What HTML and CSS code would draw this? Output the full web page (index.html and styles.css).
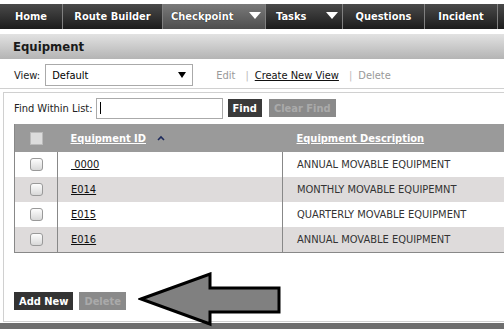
FILE: index.html
```html
<!DOCTYPE html>
<html lang="en">
<head>
    <meta charset="UTF-8">
    <title>Equipment</title>
    <link rel="stylesheet" href="styles.css">
</head>
<body>

    <!-- Main navigation -->
    <div class="topnav">
        <div class="nav-item nav-home">Home</div>
        <div class="nav-item nav-route">Route Builder</div>
        <div class="nav-item nav-check active">Checkpoint <span class="caret"></span></div>
        <div class="nav-item nav-tasks">Tasks <span class="caret caret-wide"></span></div>
        <div class="nav-item nav-questions">Questions</div>
        <div class="nav-item nav-incident">Incident</div>
        <div class="nav-item nav-rest"></div>
    </div>

    <div class="page-title">Equipment</div>

    <!-- View selector -->
    <div class="view-bar">
        <span class="label">View:</span>
        <div class="fake-select">
            <span>Default</span>
            <span class="select-arrow"></span>
        </div>
        <span class="muted link-edit">Edit</span>
        <span class="pipe">|</span>
        <a class="link" href="#">Create New View</a>
        <span class="pipe">|</span>
        <span class="muted">Delete</span>
    </div>

    <div class="list-panel">
        <div class="find-bar">
            <span class="label">Find Within List:</span>
            <div class="find-input"><span class="cursor"></span></div>
            <button class="btn btn-dark">Find</button>
            <button class="btn btn-off">Clear Find</button>
        </div>

        <table class="grid">
            <thead>
                <tr>
                    <th class="col-check"><span class="head-box"></span></th>
                    <th class="col-id"><a href="#">Equipment ID</a>
                        <svg class="sort" width="8" height="6" viewBox="0 0 8 6"><path d="M1 5 L4 2 L7 5" fill="none" stroke="#1d2a5c" stroke-width="1.6"/></svg>
                    </th>
                    <th class="col-desc"><a href="#">Equipment Description</a></th>
                </tr>
            </thead>
            <tbody>
                <tr>
                    <td class="col-check"><span class="box"></span></td>
                    <td class="col-id"><a href="#">&nbsp;0000</a></td>
                    <td class="col-desc">ANNUAL MOVABLE EQUIPMENT</td>
                </tr>
                <tr class="alt">
                    <td class="col-check"><span class="box"></span></td>
                    <td class="col-id"><a href="#">E014</a></td>
                    <td class="col-desc">MONTHLY MOVABLE EQUIPEMNT</td>
                </tr>
                <tr>
                    <td class="col-check"><span class="box"></span></td>
                    <td class="col-id"><a href="#">E015</a></td>
                    <td class="col-desc">QUARTERLY MOVABLE EQUIPMENT</td>
                </tr>
                <tr class="alt">
                    <td class="col-check"><span class="box"></span></td>
                    <td class="col-id"><a href="#">E016</a></td>
                    <td class="col-desc">ANNUAL MOVABLE EQUIPMENT</td>
                </tr>
            </tbody>
        </table>

        <div class="actions">
            <button class="btn btn-dark">Add New</button>
            <button class="btn btn-off">Delete</button>
        </div>

        <!-- callout arrow pointing at the Delete button -->
        <svg class="callout" width="150" height="60" viewBox="0 0 150 60">
            <polygon points="3,27 72,2 72,16 141,16 141,40 72,40 72,52" fill="#808080" stroke="#000" stroke-width="3" stroke-linejoin="miter"/>
        </svg>
    </div>

    <div class="footer-bar"></div>

</body>
</html>
```

FILE: styles.css
```css
body {
    margin: 0;
    font-family: "DejaVu Sans Condensed", "DejaVu Sans", sans-serif;
    font-size: 11px;
    color: #222;
    overflow: hidden;
    width: 504px;
}
.topnav {
    display: flex;
    margin-top: 4px;
    height: 25px;
    background: linear-gradient(#4a4a4a, #1c1c1c);
}
.nav-item {
    color: #fff;
    font-weight: bold;
    font-size: 11px;
    line-height: 25px;
    text-align: center;
    border-right: 1px solid #808080;
    text-shadow: 0 0 1px #000;
    flex-shrink: 0;
}
.nav-home { width: 62px; }
.nav-route { width: 99px; }
.nav-check { width: 103px; padding-left: 4px; box-sizing: border-box; }
.nav-tasks { width: 77px; padding-left: 6px; box-sizing: border-box; }
.nav-questions { width: 81px; }
.nav-incident { width: 72px; }
.nav-rest { border-right: none; flex: 1; }
.active {
    background: linear-gradient(#7a7a7a, #4e4e4e);
}
.caret {
    display: inline-block;
    width: 0;
    height: 0;
    margin-left: 12px;
    border-left: 6px solid transparent;
    border-right: 6px solid transparent;
    border-top: 7px solid #fff;
    vertical-align: 1px;
}
.caret-wide {
    margin-left: 16px;
}
.page-title {
    margin-top: 5px;
    height: 25px;
    line-height: 25px;
    padding-left: 13px;
    font-size: 13px;
    font-weight: bold;
    color: #1a1a1a;
    background: linear-gradient(#e2e2e2, #b4b4b4);
}
.view-bar {
    display: flex;
    align-items: center;
    height: 26px;
    padding: 3px 0 0 14px;
    border-bottom: 1px solid #d0d0d0;
    color: #333;
}
.label {
    color: #222;
}
.fake-select {
    display: flex;
    justify-content: space-between;
    align-items: center;
    width: 134px;
    height: 20px;
    margin-left: 5px;
    padding: 0 6px;
    border: 1px solid #aaa;
    color: #000;
}
.select-arrow {
    width: 0;
    height: 0;
    border-left: 4px solid transparent;
    border-right: 4px solid transparent;
    border-top: 6px solid #000;
}
.muted {
    color: #999;
}
.link-edit {
    margin-left: 23px;
}
.pipe {
    color: #bbb;
    margin: 0 6px 0 10px;
}
.link {
    color: #111;
}
.list-panel {
    position: relative;
    margin: 3px 0 0 3px;
    height: 228px;
    border-top: 1px solid #d0d0d0;
    border-left: 1px solid #d0d0d0;
    border-bottom: 1px solid #d0d0d0;
}
.find-bar {
    display: flex;
    align-items: center;
    height: 26px;
    padding: 2px 0 0 10px;
}
.find-input {
    width: 125px;
    height: 19px;
    margin-left: 3px;
    border: 1px solid #aaa;
    display: flex;
    align-items: center;
}
.cursor {
    width: 1px;
    height: 12px;
    margin-left: 3px;
    background: #000;
}
.btn {
    border: none;
    height: 18px;
    padding: 0 5px;
    font-family: inherit;
    font-size: 11px;
    font-weight: bold;
}
.btn-dark {
    background: #3a3a3a;
    color: #fff;
    margin-left: 5px;
}
.btn-off {
    background: #8a8a8a;
    color: #aaa;
    margin-left: 7px;
}
.grid {
    margin: 3px 0 0 10px;
    width: 560px;
    border-collapse: collapse;
    border-left: 1px solid #888;
    border-bottom: 1px solid #888;
}
.grid th {
    height: 28px;
    background: #9a9a9a;
    text-align: left;
    padding: 0;
}
.grid th a {
    color: #fff;
    font-weight: bold;
}
.grid td {
    height: 25px;
    padding: 0;
    border-right: 1px solid #888;
    color: #333;
}
.grid td a {
    color: #111;
}
.grid tr.alt td {
    background: #dedbdb;
}
.grid .col-check {
    width: 42px;
    text-align: center;
}
.col-id {
    width: 211px;
    padding-left: 13px !important;
}
.col-desc {
    padding-left: 14px !important;
}
.sort {
    margin-left: 8px;
    vertical-align: 1px;
}
.head-box {
    display: inline-block;
    width: 11px;
    height: 11px;
    background: #dcdcdc;
    border: 1px solid #bbb;
    vertical-align: middle;
}
.box {
    display: inline-block;
    width: 11px;
    height: 11px;
    border: 1px solid #999;
    border-radius: 3px;
    background: linear-gradient(#fdfdfd, #d8d8d8);
    vertical-align: middle;
}
.actions {
    display: flex;
    margin: 39px 0 0 10px;
}
.actions .btn-dark {
    margin-left: 0;
    background: #333;
}
.actions .btn-off {
    margin-left: 6px;
}
.callout {
    position: absolute;
    left: 134px;
    top: 179px;
}
.footer-bar {
    margin-top: 1px;
    height: 8px;
    background: #6e6e6e;
}
```
